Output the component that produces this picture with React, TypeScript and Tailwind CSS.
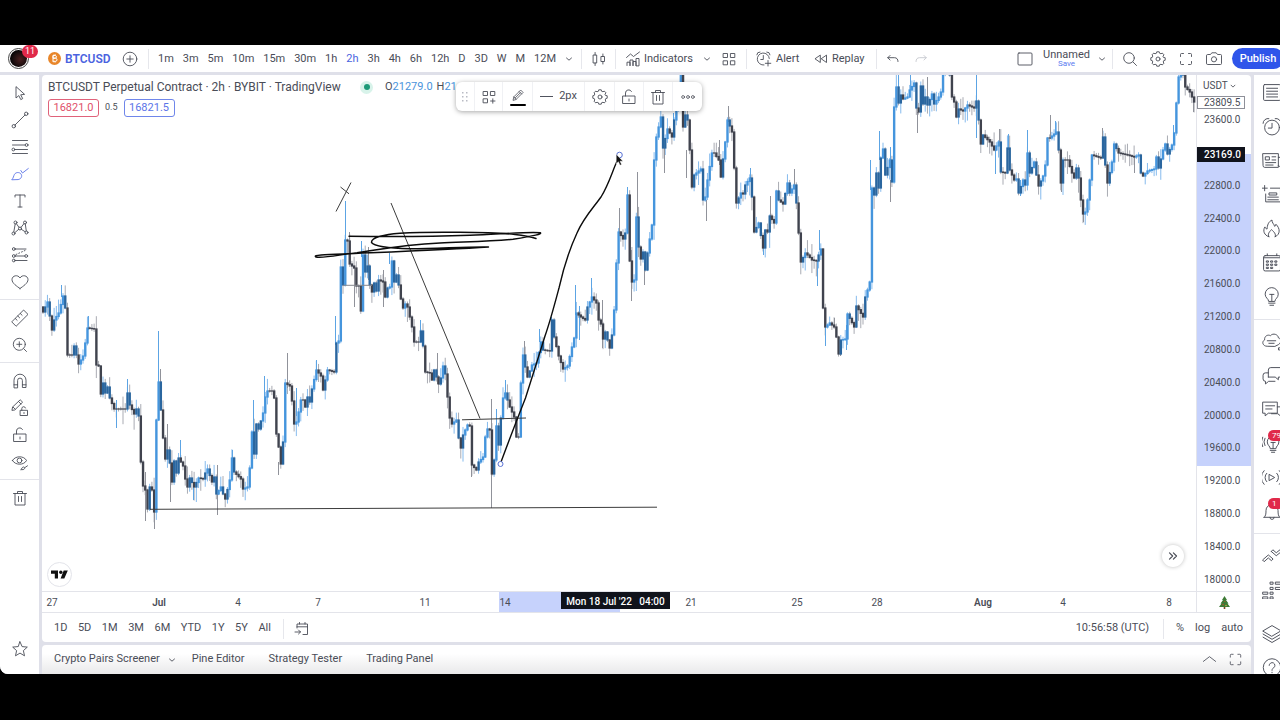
import type { ReactNode } from 'react';

/* ---------- icons ---------- */

type IconProps = { children: ReactNode; className?: string; size?: number };

function Icon({ children, className = '', size = 18 }: IconProps) {
  return (
    <svg
      width={size}
      height={size}
      viewBox="0 0 18 18"
      fill="none"
      stroke="currentColor"
      strokeWidth="0.9"
      strokeLinecap="round"
      strokeLinejoin="round"
      aria-hidden="true"
      className={`shrink-0 ${className}`}
    >
      {children}
    </svg>
  );
}

function gearPath(): string {
  const pts: string[] = [];
  for (let i = 0; i < 8; i++) {
    const base = (i * Math.PI) / 4;
    const spots: [number, number][] = [
      [-0.26, 6],
      [-0.17, 7.3],
      [0.17, 7.3],
      [0.26, 6],
    ];
    for (const [da, r] of spots) {
      pts.push(`${(9 + r * Math.cos(base + da)).toFixed(2)} ${(9 + r * Math.sin(base + da)).toFixed(2)}`);
    }
  }
  return `M${pts.join('L')}Z`;
}
const GEAR = gearPath();

const icons = {
  cursor: <path d="M5 3v11l2.800-2.400 2 4 1.900-1-2-3.800 3.500-.4z" />,
  trend: (
    <>
      <circle cx="2.800" cy="15.200" r="1.700" />
      <circle cx="15.200" cy="2.800" r="1.700" />
      <path d="M4 14 14 4" />
    </>
  ),
  fib: (
    <>
      <path d="M1.500 2.500h15M1.500 7h12.500M4 11.500H16.500M1.500 15.500h15" />
      <circle cx="15.600" cy="7" r="1.400" />
      <circle cx="2.400" cy="11.500" r="1.400" />
    </>
  ),
  brush: (
    <path d="M1 14.500c1.500-1.500 1.500-3.500 2.500-5.200C5 7 8.500 7 10 9s.4 5-2.500 5.500zM9.800 5.500 11.500 8 17.300 3.500" />
  ),
  text: <path d="M4 5V3h10v2M9 3v12M7 15h4" />,
  pattern: (
    <>
      <circle cx="4.500" cy="3.500" r="1.500" />
      <circle cx="14" cy="3.500" r="1.500" />
      <circle cx="2.500" cy="14.500" r="1.500" />
      <circle cx="9" cy="9.500" r="1.500" />
      <circle cx="15.500" cy="13.500" r="1.500" />
      <path d="M4.200 5 2.800 13M5.400 4.700 8 8.400M13 4.600 10 8.400M14.300 5l1 7M3.800 13.700 7.700 10.300M10.300 10.300l3.900 2.500" />
    </>
  ),
  forecast: (
    <>
      <circle cx="2.800" cy="3" r="1.400" />
      <path d="M4.200 3H15" />
      <circle cx="2.800" cy="10" r="1.400" />
      <circle cx="15.200" cy="10" r="1.400" />
      <path d="M4.200 10h9.600" />
      <circle cx="2.800" cy="14.500" r="1.400" />
      <path d="M4.200 14.500H16" />
      <path d="M5 8.500 14 4.500" strokeDasharray="1 2" />
    </>
  ),
  heart: <path d="M9 15.500C6 13.300 1 10.300 1 6.600 1 2.500 6.800 1.200 9 5c2.200-3.800 8-2.500 8 1.600 0 3.700-5 6.700-8 8.900z" />,
  ruler: <path d="m1 12.600 11.600-11.600 4.400 4.400L5.400 17zM4.300 9.500l1.800 1.800M6.800 7l1.800 1.800M9.300 4.500l1.800 1.800" />,
  zoomIn: (
    <>
      <circle cx="8.300" cy="8.300" r="6" />
      <path d="M12.800 12.800 15.500 15.500M5.800 8.300h5M8.300 5.800v5" />
    </>
  ),
  magnet: <path d="M3 15.500V8.200a6 6 0 0 1 12 0v7.300h-3.600V8.500a2.400 2.400 0 0 0-4.800 0v7zM3 12.800h3.600M11.400 12.800H15" />,
  pencilLock: (
    <path d="m1 11 .6-3L9.200.8l2.400 2.400L4 10.700zM7.500 2.500 10 5M2 8l2.200 2.200M9.500 16.500h7v-5.200h-7zM10.800 11.300V9.500a1.900 1.900 0 0 1 3.700-.5M13 13.500v1" />
  ),
  lockOpen: <path d="M3 8h12v7.500H3zM5.500 8V5a3.200 3.200 0 0 1 6-1.500M9 11v2" />,
  eye: (
    <>
      <path d="M1.500 7.500C4 2.500 13 2.500 15.500 7.500 13 12.500 4 12.500 1.500 7.500z" />
      <circle cx="8.500" cy="7.500" r="2.400" />
      <path d="M10 16.500c1-.6.8-2.300 2.500-2.500 1.600.1 1.800 2 0 2.500zM14 14.500l2.500-1.700" />
    </>
  ),
  trash: <path d="M2.500 4.500h13M6.500 4.500v-2h5v2M4 4.500V16h10V4.500M7.500 7.500v5M10.500 7.500v5" />,
  star: <path d="m9 1.800 2.100 4.800 5.200.5-3.900 3.500 1.100 5.200L9 13.100l-4.500 2.700 1.100-5.200-3.900-3.500 5.200-.5z" />,
  plusCircle: (
    <>
      <circle cx="9" cy="9" r="6.800" />
      <path d="M5.800 9h6.400M9 5.800v6.400" />
    </>
  ),
  candles: <path d="M3.500 5h3.200v8H3.500zM5.100 2.500V5M5.100 13v2.500M11.300 6.500h3.200v5h-3.200zM12.900 4v2.500M12.900 11.500V14" />,
  indicators: <path d="M3 15.500v-3.300h3v3.300M6 15.500V10h3v5.500M9 15.500v-4h3v4M12 15.500V8.500h3v7zM2.500 7.500 6.500 4l3 2.500L15.500 2" />,
  grid: <path d="M3.500 3.500h4v4h-4zM10.800 3.500h4v4h-4zM3.500 10.800h4v4h-4zM10.800 10.800h4v4h-4z" />,
  gridPlus: <path d="M3.500 3.500h4v4h-4zM10.800 3.500h4v4h-4zM3.500 10.800h4v4h-4zM12.800 10.800v4.400M10.600 13H15" />,
  alertPlus: <path d="M14.300 8.500A6 6 0 1 0 9 15M8.300 5.500v4H5.800M1.800 4.800A3 3 0 0 1 5 2M11.800 2A3 3 0 0 1 15 4.800M13 10.500v5.500M10.300 13.300h5.500" />,
  replay: <path d="M8.300 5.500v7L3.300 9zM14.500 5.500v7L9.500 9z" />,
  undo: <path d="M6 5.500 3.800 7.700 6 10M3.800 7.700h6.700c2.300 0 3.500 1.500 3.500 3.800" />,
  redo: <path d="M12 5.500 14.200 7.700 12 10M14.200 7.700H7.500C5.200 7.700 4 9.200 4 11.500" />,
  square: <rect x="2" y="3" width="14" height="12" rx="1" />,
  search: (
    <>
      <circle cx="8" cy="8" r="5.300" />
      <path d="m12 12 3.500 3.500" />
    </>
  ),
  gear: (
    <>
      <path d={GEAR} />
      <circle cx="9" cy="9" r="2" />
    </>
  ),
  full: <path d="M3.500 6.500V4.500A1 1 0 0 1 4.500 3.500h2M11.500 3.500h2A1 1 0 0 1 14.500 4.500v2M14.500 11.500v2a1 1 0 0 1-1 1h-2M6.500 14.500h-2A1 1 0 0 1 3.500 13.500v-2" />,
  camera: (
    <>
      <path d="M1.500 5.500A1 1 0 0 1 2.500 4.500h3L6.800 2.800h4.400l1.300 1.700h3a1 1 0 0 1 1 1v8a1 1 0 0 1-1 1h-13a1 1 0 0 1-1-1z" />
      <circle cx="9" cy="9.300" r="2.600" />
    </>
  ),
  chevron: <path d="m6.500 8 2.500 2.200L11.500 8" />,
  chevronUp: <path d="m2.500 11 6.500-5 6.500 5" />,
  goto: <path d="M4 8V4h10.500v10.500H10M4 6.800h10.500M6.500 4V2.500M12 4V2.500M2 12h5.500M5.500 10l2 2-2 2" />,
  pencil: <path d="m3.500 13.500.8-3.500 7.700-7.700 2.700 2.700L7 12.700zM10.300 4l2.700 2.700M4.300 10l2.700 2.700M5.700 11.300l6-6" />,
  dots: (
    <>
      <circle cx="3.500" cy="9" r="1.600" />
      <circle cx="9" cy="9" r="1.600" />
      <circle cx="14.500" cy="9" r="1.600" />
    </>
  ),
  watchlist: <path d="M2.500 1.500h14a1 1 0 0 1 1 1v13a1 1 0 0 1-1 1h-14a1 1 0 0 1-1-1v-13a1 1 0 0 1 1-1zM4.300 5h10.500M4.300 7.800h10.500M4.300 10.500h10.500M4.300 13.200h10.500" />,
  alarm: (
    <>
      <circle cx="9.500" cy="10" r="7" />
      <path d="M9.500 6v4.500H6M1 6A4.500 4.500 0 0 1 6.500 1.500M12.500 1.500A4.500 4.500 0 0 1 18 6" />
    </>
  ),
  news: <path d="M1 2.500h14.500V15.500H2.500A1.500 1.500 0 0 1 1 14zM15.500 6H18v8a1.500 1.500 0 0 1-2.500 0M3.500 5.500h3.500v3H3.500zM9.500 5.500H13M9.500 8.500H13M3.500 11h9.500M3.500 13.300h7" />,
  dataWindow: <path d="M2.500.5v5M0 3h5M8 3h9.500v13h-14V8.500M7 7.500h7v2H7zM5.500 11.500h10M5.500 14h10" />,
  fire: <path d="M6.500 16.800C2 15.500.5 11 2.800 7.500c.5 1.300 1 1.800 2 2C5 6 6 2.500 9.500 1c-.3 2.500 1.800 3.500 2.500 6 .8-.4 1-1 1.200-2 4 3.800 4.500 9.500-.7 11.800M6.500 16.800C5 14 7 12.300 9 10c2.300 2.300 4.500 4 3.500 6.800" />,
  calendar: (
    <>
      <rect x="1.500" y="2.500" width="16" height="14.500" rx="1.500" />
      <path d="M5 .8v1.700M14 .8v1.700M1.500 4.500h16" />
      <path d="M4.500 7.500h1.600v1.200H4.500zM8.500 7.500h1.600v1.200H8.500zM12.500 7.500h1.600v1.200h-1.600zM4.500 10.500h1.600v1.200H4.500zM8.500 10.500h1.600v1.200H8.500zM12.500 10.500h1.600v1.200h-1.600zM4.500 13.500h1.600v1.200H4.500zM8.500 13.500h1.600v1.200H8.500z" />
    </>
  ),
  bulb: <path d="M6.300 13.300C6.300 11 3 10.500 3 6.800a6.200 6.200 0 0 1 12.400 0c0 3.700-3.200 4.200-3.200 6.500zM6.300 15.300h6M7.500 17.300h3.500M7.300 7h4M9.300 7v6" />,
  cloud: <path d="M4.500 13.500C.5 13.500-.5 9 2.500 7.500 2 4 5.500 2 8 3.500c2.500-3 7.500-1 7.500 2 3 .8 3 5 0 6.500l-3 1.500zM5 8.300h8M6.500 10.700h5M16 15h2.500v2H16z" />,
  chats: <path d="M6 10.500V3.800A2.300 2.300 0 0 1 8.300 1.500h9M6 6.500H3.300A2.300 2.300 0 0 0 1 8.800v3.400a2.300 2.300 0 0 0 2.300 2.300v2.500l3-2.500h6M6 10.500h6.500l3 2.500v-2.500h2.500" />,
  messages: <path d="M1 2h13.500v10.500H6L3 15v-2.500H1zM3.500 5.500h8.500M3.500 8.500h6M14.500 6.500H18v9l-3-2.500H9" />,
  bulbLive: <path d="M7.800 13.500C7.800 11.500 5 10.800 5 7.500a5.500 5.500 0 0 1 11 0c0 3.300-2.800 4-2.800 6zM7.800 15.500h5.400M9 17.300h3M8.500 8h4M10.500 8v5.500M2.800 4a7 7 0 0 0 0 7M.6 3a9.500 9.500 0 0 0 0 9" />,
  stream: <path d="M7 6.200 12 9l-5 2.800zM4.500 5a5.500 5.500 0 0 0 0 8M2 2.500a9 9 0 0 0 0 13M14 5a5.500 5.500 0 0 1 0 8M16.500 2.500a9 9 0 0 1 0 13" />,
  bell: <path d="M2 14.500h15c-1.500-1.300-1.800-2.800-1.800-6.500a5.700 5.700 0 0 0-11.400 0c0 3.700-.3 5.200-1.800 6.500zM7.500 14.500a2 2 0 0 0 4 0" />,
  waves: <path d="M.8 13 6 8.500l4.500 3.800-1.600 1.600L6 11.300 2.300 14.600zM8.800 5.200l1.500-1.600 3.200 2.800L18 2.800M8.800 5.200l4.700 4L18 5.600" />,
  dom: <path d="M8 2h2.500v2H8zM13 2h5v2h-5zM8 7h2.500v2H8zM13 7h5v2h-5zM1 11.500h4.500v2H1zM8 11.500h2.500v2H8zM1 16h4.500v2H1zM8 16h2.500v2H8z" />,
  layers: <path d="m1 6.500 8.500-5 8.500 5-8.500 5zM1 9.500l8.500 5 8.500-5M1 12.500l8.500 5 8.500-5" />,
  help: (
    <>
      <circle cx="9.500" cy="9" r="8.300" />
      <path d="M6.800 7a2.700 2.700 0 1 1 4.200 2.300c-1 .7-1.500 1-1.500 2.400M9.500 13.500v.5" />
    </>
  ),
};

/* ---------- price series ---------- */

const CLOSES: number[] = [
  43,312,48,302,51,330,54,320,58,313,62,296,64,308,66,355,71,355,73,346,77,355,79,364,83,356,86,343,88,328,94,329,95,365,98,366,99,394,102,383,105,393,107,387,110,398,113,409,125,409,127,393,130,405,133,414,136,409,
  138,416,139,462,141,486,144,490,145,509,148,487,152,490,155,512,157,420,159,382,162,438,164,459,166,450,169,463,171,482,173,461,175,473,177,458,183,466,185,479,187,487,190,478,193,487,198,478,202,479,205,473,208,469,
  211,482,215,477,217,494,220,487,222,494,226,499,229,480,232,458,235,472,240,479,242,489,247,487,249,468,251,432,253,454,257,424,259,429,262,413,264,397,266,391,271,391,273,398,275,434,277,447,279,464,283,442,285,383,
  289,386,291,401,293,424,295,422,297,412,299,400,301,400,303,407,306,397,308,402,312,389,316,370,320,376,323,390,327,370,333,372,335,343,337,341,339,267,343,285,345,240,348,241,350,264,353,268,355,286,357,286,359,311,
  361,255,363,272,366,266,369,285,372,292,374,283,376,291,379,280,382,282,384,297,386,288,388,287,390,261,392,282,394,275,397,285,399,299,401,308,403,304,408,307,412,327,414,342,418,342,421,331,423,346,425,372,429,373,
  432,380,434,370,438,384,441,378,443,366,445,374,447,397,449,418,452,424,457,420,459,438,461,448,463,435,467,425,470,426,472,465,476,470,479,462,483,457,485,437,488,429,490,430,492,474,494,460,496,426,498,445,501,418,
  503,398,506,393,510,407,513,417,515,437,518,437,520,383,523,355,526,367,528,377,532,365,537,363,541,342,543,350,549,351,552,320,554,337,558,356,563,369,568,366,572,347,574,338,576,313,580,317,585,320,587,307,592,297,
  597,303,599,320,601,324,603,339,605,332,609,348,611,335,613,310,615,263,618,232,622,239,625,233,627,195,629,261,632,282,634,280,636,217,638,247,641,259,643,252,645,270,648,253,651,225,653,160,655,137,660,117,664,148,
  668,129,672,137,675,120,677,110,679,97,681,70,683,127,685,115,687,120,689,150,692,187,695,175,700,169,702,200,706,197,708,180,711,153,715,153,718,160,721,177,723,159,726,142,728,120,732,132,735,168,737,203,740,193,
  743,194,746,185,749,178,752,197,754,232,758,223,762,248,764,230,767,232,769,216,773,223,775,191,779,200,784,204,787,183,790,193,793,185,795,203,797,233,800,262,805,253,808,255,812,260,817,261,820,249,822,308,824,327,
  830,323,835,327,837,337,839,354,841,340,845,339,848,314,853,327,857,306,862,317,864,297,867,290,869,282,871,188,873,195,875,173,877,188,880,158,883,149,885,175,889,160,891,182,893,107,895,87,897,103,899,95,902,99,
  907,97,910,90,913,83,915,108,917,112,920,86,922,104,924,97,928,105,931,94,934,104,938,97,941,92,943,73,947,50,949,75,951,97,953,102,955,117,958,109,963,111,968,105,975,108,977,101,979,120,981,144,984,135,990,142,
  995,150,999,142,1001,172,1005,173,1008,148,1010,170,1013,180,1017,179,1019,193,1022,180,1024,185,1027,153,1030,173,1033,162,1036,175,1038,186,1042,176,1044,165,1046,138,1050,138,1057,132,1059,150,1061,183,1063,160,
  1068,160,1071,173,1075,178,1077,168,1079,178,1081,200,1083,214,1086,212,1088,200,1090,180,1092,155,1100,158,1102,137,1104,165,1108,183,1112,162,1115,144,1118,153,1127,155,1135,157,1139,155,1141,173,1143,176,1147,171,
  1153,169,1157,157,1159,168,1162,150,1166,144,1168,154,1172,145,1175,133,1177,103,1179,77,1181,68,1183,75,1185,87,1190,92,1193,102,
];

/* x, top, bottom and direction of the long wicks */
const WICKS: [number, number, number, boolean][] = [
  [61, 285, 297, true], [88, 316, 330, true], [116, 400, 428, true], [127, 379, 394, true], [145, 472, 521, false], [154, 498, 529, false], [158, 331, 385, true],
  [160, 369, 384, false], [167, 424, 455, false], [170, 462, 502, false], [180, 440, 462, true], [193, 487, 500, true], [217, 465, 515, false],
  [232, 450, 460, true], [253, 400, 440, true], [264, 376, 397, true], [278, 462, 475, false], [287, 353, 388, false], [296, 388, 416, true],
  [316, 360, 372, true], [335, 316, 345, true], [345, 201, 242, true], [349, 232, 244, false], [354, 268, 307, false], [361, 241, 257, true],
  [368, 247, 280, false], [383, 270, 307, false], [389, 253, 264, true], [420, 320, 332, true], [437, 353, 384, false], [471, 460, 477, false],
  [491, 399, 430, false], [491, 474, 508, false], [496, 409, 430, true], [505, 380, 395, true], [524, 341, 356, false], [539, 329, 342, true],
  [551, 317, 325, true], [575, 285, 315, true], [579, 306, 340, true], [591, 278, 298, true], [602, 300, 348, false], [619, 208, 234, false],
  [627, 187, 197, true], [631, 250, 301, false], [637, 172, 218, false], [644, 262, 285, false], [664, 148, 173, false], [673, 113, 125, true],
  [686, 150, 178, false], [706, 200, 221, false], [719, 140, 165, false], [728, 106, 122, false], [750, 168, 178, true], [763, 245, 255, true],
  [770, 196, 218, false], [794, 169, 185, false], [819, 230, 250, true], [817, 261, 286, true], [825, 327, 346, true], [834, 318, 326, false],
  [840, 350, 356, false], [846, 325, 350, true], [870, 160, 190, true], [879, 131, 160, true], [890, 180, 202, false], [890, 147, 160, true],
  [898, 75, 90, true], [910, 75, 90, true], [917, 112, 133, false], [927, 77, 100, false], [976, 75, 138, true], [999, 129, 142, false],
  [995, 150, 174, true], [1008, 134, 150, true], [1020, 180, 196, true], [1027, 130, 155, true], [1050, 115, 139, false], [1055, 121, 135, true],
  [1061, 180, 192, false], [1083, 212, 222, false], [1102, 128, 139, false], [1134, 156, 173, false], [1173, 125, 142, true], [1193, 100, 112, false],
];

type Bar = { x: number; open: number; close: number; color: string; hi: number; lo: number; up: boolean };

function buildBars(): Bar[] {
  const step = 80 / 36;
  const slots: [number, number][] = [];
  let last = -1;
  for (let i = 0; i < CLOSES.length; i += 2) {
    last = Math.max(last + 1, Math.round((CLOSES[i] - 43) / step));
    slots.push([last, CLOSES[i + 1]]);
  }
  const closes: number[] = [];
  for (let k = 0; k < slots.length; k++) {
    const [i1, y1] = slots[k];
    if (k > 0) {
      const [i0, y0] = slots[k - 1];
      for (let i = i0 + 1; i < i1; i++) closes.push(y0 + ((y1 - y0) * (i - i0)) / (i1 - i0));
    }
    closes.push(y1);
  }
  let seed = 7;
  const rand = () => {
    seed = (seed * 16807) % 2147483647;
    return seed / 2147483647;
  };
  let prevUp = false;
  return closes.map((close, i) => {
    const open = i === 0 ? close - 5 : closes[i - 1];
    const up = close < open;
    const turned = up !== prevUp && Math.abs(close - open) > 4 && Math.abs(close - open) < 32;
    prevUp = up;
    const color = turned ? '#2a669f' : up ? '#4595dd' : '#40434e';
    return {
      x: 43 + i * step,
      open,
      close,
      color,
      up,
      hi: Math.min(open, close) - 1 - rand() * rand() * 15,
      lo: Math.max(open, close) + 1 + rand() * rand() * 15,
    };
  });
}
const BARS = buildBars();

function PriceChart() {
  return (
    <svg
      className="absolute inset-0 h-full w-full"
      viewBox="42 75 1154 516"
      preserveAspectRatio="xMaxYMin slice"
      role="img"
      aria-label="BTCUSDT 2 hour candles"
    >
      {BARS.map((b, i) => (
        <rect key={i} x={b.x - 0.5} y={b.hi} width="1" height={b.lo - b.hi} fill={b.up ? '#86bbee' : '#a9abb3'} />
      ))}
      {WICKS.map(([x, top, bottom, up], i) => (
        <rect key={i} x={x} y={top} width="1" height={bottom - top} fill={up ? '#5ca4e4' : '#90929a'} />
      ))}
      {BARS.map((b, i) => (
        <rect
          key={i}
          x={b.x - 1.15}
          y={Math.min(b.open, b.close) - 0.6}
          width="2.400"
          height={Math.abs(b.close - b.open) + 1.2}
          fill={b.color}
        />
      ))}
      <g fill="none" stroke="#3c3c3c" strokeWidth="1">
        <path d="M150 509.300 657 507.200M391 203l89 215.500M462 419.800l64-1.800M336 211.500l15-29M340.500 187l8.500 6.800" />
        <path d="M343 285.300h29" stroke="#85878f" />
      </g>
      <g fill="none" stroke="#0c0c0c" strokeWidth="1.400" strokeLinecap="round" strokeLinejoin="round">
        <path d="M349 236.200C390 236.800 440 236.300 470 235.200S530 231.500 540.500 232.800C542 234 535 235.800 513 239.300C490 241.500 465 241.800 440 243C400 245 380 249.500 357 252.700C340 254.500 324 258.500 316 257C312 255 325 254.500 343 254C400 251.500 450 249.500 488.500 247C470 246.500 440 248.500 410 248.800C385 248 374 246 371.500 242.500C371 237 385 234.500 400 233.200C430 231.500 490 232 515 234.500Q528 236 536 238.500" />
        <path d="M501 462C508 443 518 417 525.500 398C531 381 540 352 545 336C550 322 555 303 559 288C563 270 571 246 577 233C584 217 594 207 601 197C609 184 612 172 617.500 160" />
      </g>
      <g fill="#fff" stroke="#5b74d6" strokeWidth="1">
        <circle cx="500.500" cy="464" r="2.500" />
        <circle cx="619.500" cy="155" r="2.800" />
      </g>
      <path d="M616.200 154.300v9.500l2.200-2 1.600 3.500 1.600-.8-1.500-3.300h2.900z" fill="#111" stroke="#fff" strokeWidth=".5" />
    </svg>
  );
}

/* ---------- page ---------- */

const INTERVALS = ['1m', '3m', '5m', '10m', '15m', '30m', '1h', '2h', '3h', '4h', '6h', '12h', 'D', '3D', 'W', 'M', '12M'];
const RANGES = ['1D', '5D', '1M', '3M', '6M', 'YTD', '1Y', '5Y', 'All'];
const PRICES = [23600, 23200, 22800, 22400, 22000, 21600, 21200, 20800, 20400, 20000, 19600, 19200, 18800, 18400, 18000];
const DATES: [string, number][] = [
  ['27', 10], ['Jul', 117], ['4', 196], ['7', 276], ['11', 383], ['14', 463],
  ['21', 649], ['25', 755], ['28', 835], ['Aug', 941], ['4', 1021], ['8', 1127],
];

type Tool = { label: string; icon: ReactNode; badge?: string; active?: boolean };

const LEFT_TOOLS: Tool[][] = [
  [
    { label: 'Cursor', icon: icons.cursor },
    { label: 'Trend line', icon: icons.trend },
    { label: 'Fib retracement', icon: icons.fib },
    { label: 'Brush', icon: icons.brush, active: true },
    { label: 'Text', icon: icons.text },
    { label: 'Patterns', icon: icons.pattern },
    { label: 'Prediction', icon: icons.forecast },
    { label: 'Icons', icon: icons.heart },
  ],
  [
    { label: 'Measure', icon: icons.ruler },
    { label: 'Zoom in', icon: icons.zoomIn },
  ],
  [
    { label: 'Magnet mode', icon: icons.magnet },
    { label: 'Stay in drawing mode', icon: icons.pencilLock },
    { label: 'Lock drawings', icon: icons.lockOpen },
    { label: 'Hide drawings', icon: icons.eye },
  ],
];

const RIGHT_TOOLS: Tool[][] = [
  [
    { label: 'Watchlist', icon: icons.watchlist },
    { label: 'Alerts', icon: icons.alarm },
    { label: 'News', icon: icons.news },
    { label: 'Data window', icon: icons.dataWindow },
    { label: 'Hotlists', icon: icons.fire },
    { label: 'Calendar', icon: icons.calendar },
    { label: 'My ideas', icon: icons.bulb },
  ],
  [
    { label: 'Public chats', icon: icons.cloud },
    { label: 'Private chats', icon: icons.chats },
    { label: 'Messages', icon: icons.messages },
    { label: 'Ideas stream', icon: icons.bulbLive, badge: '79' },
    { label: 'Streams', icon: icons.stream },
    { label: 'Notifications', icon: icons.bell, badge: '1' },
  ],
  [
    { label: 'Order panel', icon: icons.waves },
    { label: 'Depth of market', icon: icons.dom },
  ],
];

function Divider() {
  return <span className="h-5 w-px shrink-0 bg-[#e6e7ec]" />;
}

function IconButton({ label, children, className = '' }: { label: string; children: ReactNode; className?: string }) {
  return (
    <button type="button" aria-label={label} className={`flex shrink-0 items-center justify-center ${className}`}>
      {children}
    </button>
  );
}

function Header() {
  return (
    <header className="flex h-[27px] shrink-0 items-center overflow-hidden bg-white text-[11px]">
      <div className="flex w-[148px] shrink-0 items-center">
        <button type="button" aria-label="Account" className="relative ml-2 size-[21px] rounded-full border border-[#444] p-px">
          <span className="block size-full rounded-full bg-[radial-gradient(circle_at_60%_55%,#4a2020,#0b0708_65%)]" />
          <span className="absolute -top-1 left-[13px] flex h-[13px] w-4 items-center justify-center rounded-full bg-[#e0294a] text-[9px] text-white">
            11
          </span>
        </button>
        <svg width="13" height="13" viewBox="0 0 13 13" className="ml-[19px] shrink-0" aria-hidden="true">
          <circle cx="6.500" cy="6.500" r="6.500" fill="#e8862a" />
          <path
            d="M5 3.500h2.200c1.700 0 1.700 2.700 0 2.700H5zM5 6.200h2.600c1.900 0 1.900 3.100 0 3.100H4.600M5 3.500v5.800M6 2.400v1M7.300 2.400v1M6 9.400v1M7.300 9.400v1"
            fill="none"
            stroke="#fff"
            strokeWidth="1"
          />
        </svg>
        <button type="button" className="ml-1 text-[12px] font-semibold text-[#4a63e0]">BTCUSD</button>
        <IconButton label="Compare" className="ml-auto mr-[9px]">
          <Icon>{icons.plusCircle}</Icon>
        </IconButton>
      </div>
      <Divider />
      <nav aria-label="Interval" className="ml-[9px] flex w-[398px] shrink-0 items-center justify-between pt-px">
        {INTERVALS.map((t) => (
          <button key={t} type="button" className={t === '2h' ? 'text-[#4a63e0]' : ''}>
            {t}
          </button>
        ))}
      </nav>
      <IconButton label="More intervals" className="ml-1 mr-[3px]">
        <Icon>{icons.chevron}</Icon>
      </IconButton>
      <Divider />
      <IconButton label="Chart type" className="w-[33px]"><Icon>{icons.candles}</Icon></IconButton>
      <Divider />
      <button type="button" className="ml-2 flex w-[68px] shrink-0 items-center gap-[2px]">
        <Icon>{icons.indicators}</Icon>
        <span className="pt-px">Indicators</span>
      </button>
      <IconButton label="Favourite indicators" className="ml-[6px]"><Icon>{icons.chevron}</Icon></IconButton>
      <IconButton label="Templates" className="ml-1 mr-2"><Icon>{icons.grid}</Icon></IconButton>
      <Divider />
      <button type="button" className="ml-2 flex w-[45px] shrink-0 items-center gap-[3px]">
        <Icon>{icons.alertPlus}</Icon>
        <span className="pt-px">Alert</span>
      </button>
      <button type="button" className="ml-3 flex w-[54px] shrink-0 items-center gap-[2px]">
        <Icon>{icons.replay}</Icon>
        <span className="pt-px">Replay</span>
      </button>
      <span className="ml-[10px] flex"><Divider /></span>
      <IconButton label="Undo" className="ml-[7px]"><Icon>{icons.undo}</Icon></IconButton>
      <IconButton label="Redo" className="ml-[10px] text-[#c5c7ce]"><Icon>{icons.redo}</Icon></IconButton>

      <div className="ml-auto flex shrink-0 items-center">
        <IconButton label="Layout" className="mr-[9px]"><Icon>{icons.square}</Icon></IconButton>
        <div className="flex flex-col items-center leading-none">
          <span className="leading-[11px]">Unnamed</span>
          <button type="button" className="text-[8px] leading-2 text-[#5b7bf0]">Save</button>
        </div>
        <IconButton label="Manage layouts" className="ml-[3px] mr-[1px]"><Icon>{icons.chevron}</Icon></IconButton>
        <Divider />
        <div className="ml-2 flex items-center gap-[10px]">
          <IconButton label="Search"><Icon>{icons.search}</Icon></IconButton>
          <IconButton label="Settings"><Icon>{icons.gear}</Icon></IconButton>
          <IconButton label="Fullscreen"><Icon>{icons.full}</Icon></IconButton>
          <IconButton label="Snapshot"><Icon>{icons.camera}</Icon></IconButton>
        </div>
        <button type="button" className="-mr-1 ml-[9px] flex h-[21px] w-[52px] items-center justify-center rounded-full bg-[#2f55ea] pt-px font-medium text-white">
          Publish
        </button>
      </div>
    </header>
  );
}

function LeftToolbar() {
  return (
    <aside aria-label="Drawing tools" className="flex w-[39px] shrink-0 flex-col bg-white">
      {LEFT_TOOLS.map((group, g) => (
        <div key={g} className="flex flex-col border-b border-[#e3e4ea] py-1">
          {group.map((t) => (
            <IconButton key={t.label} label={t.label} className={`h-[27px] w-full ${t.active ? 'text-[#5b74e8]' : ''}`}>
              <Icon>{t.icon}</Icon>
            </IconButton>
          ))}
        </div>
      ))}
      <IconButton label="Remove drawings" className="mt-1 h-[27px] w-full"><Icon>{icons.trash}</Icon></IconButton>
      <IconButton label="Favourites" className="mt-auto mb-3 h-[27px] w-full"><Icon>{icons.star}</Icon></IconButton>
    </aside>
  );
}

function RightToolbar() {
  return (
    <aside aria-label="Widgets" className="flex w-[26px] shrink-0 flex-col overflow-hidden bg-white">
      {RIGHT_TOOLS.map((group, g) => (
        <div key={g} className={g === 0 ? 'border-b border-[#e3e4ea] pb-[6px]' : g === 1 ? 'border-b border-[#e3e4ea] pt-1 pb-[5px]' : 'pt-1'}>
          {group.map((t) => (
            <button key={t.label} type="button" aria-label={t.label} className="relative flex h-[34px] w-full items-center pl-2">
              <Icon size={19}>{t.icon}</Icon>
              {t.badge && (
                <span className="absolute top-1 left-[14px] flex h-[11px] min-w-4 items-center rounded-full bg-[#e0294a] px-1 text-[8px] text-white">
                  {t.badge}
                </span>
              )}
            </button>
          ))}
        </div>
      ))}
      <IconButton label="Object tree" className="mt-[10px] h-[34px] w-full justify-start! pl-2"><Icon size={19}>{icons.layers}</Icon></IconButton>
      <IconButton label="Help" className="h-[34px] w-full justify-start! pl-2"><Icon size={19}>{icons.help}</Icon></IconButton>
    </aside>
  );
}

function DrawingToolbar() {
  return (
    <div
      role="toolbar"
      aria-label="Brush"
      className="absolute top-[7px] left-[414px] flex h-[29px] items-center divide-x divide-[#f0f1f4] rounded-md bg-white text-[11px] shadow-[0_1px_5px_rgba(0,0,0,0.35)]"
    >
      <span className="flex h-full w-[19px] items-center justify-center">
        <svg width="6" height="10" viewBox="0 0 6 10" fill="#b9bbc4" aria-hidden="true">
          <path d="M0 0h1.500v1.500H0zM4 0h1.500v1.500H4zM0 4h1.500v1.500H0zM4 4h1.500v1.500H4zM0 8h1.500v1.500H0zM4 8h1.500v1.500H4z" />
        </svg>
      </span>
      <IconButton label="Templates" className="h-full w-[28px]"><Icon>{icons.gridPlus}</Icon></IconButton>
      <button type="button" aria-label="Line colour" className="flex h-full w-[30px] flex-col items-center justify-center">
        <Icon size={16}>{icons.pencil}</Icon>
        <span className="h-[2px] w-4 rounded-full bg-black" />
      </button>
      <button type="button" className="flex h-full w-[52px] items-center justify-center gap-[6px]">
        <span className="h-px w-[13px] bg-[#50535e]" />
        2px
      </button>
      <IconButton label="Settings" className="h-full w-[30px]"><Icon>{icons.gear}</Icon></IconButton>
      <IconButton label="Lock" className="h-full w-[29px]"><Icon>{icons.lockOpen}</Icon></IconButton>
      <IconButton label="Remove" className="h-full w-[29px]"><Icon>{icons.trash}</Icon></IconButton>
      <IconButton label="More" className="h-full w-[29px]"><Icon size={16}>{icons.dots}</Icon></IconButton>
    </div>
  );
}

function ChartPane() {
  return (
    <div className="relative min-w-0 flex-1 overflow-hidden">
      <PriceChart />
      <div className="relative flex items-center px-[6px] pt-1 leading-4">
        <h1 className="min-w-[300px] text-[12px] whitespace-nowrap">BTCUSDT Perpetual Contract · 2h · BYBIT · TradingView</h1>
        <span className="ml-3 flex size-[13px] items-center justify-center rounded-full bg-[#d8f3ea]">
          <span className="size-[6px] rounded-full bg-[#1d9a78]" />
        </span>
        <p className="ml-3 flex gap-1 text-[11px]">
          <span>O<span className="text-[#4a94dc]">21279.0</span></span>
          <span>H<span className="text-[#4a94dc]">21</span></span>
        </p>
      </div>
      <div className="relative mt-1 flex items-center gap-[6px] px-[6px] text-[11px]">
        <button type="button" className="h-[18px] w-[51px] rounded-[3px] border border-[#e0627a] text-[#e0506a]">16821.0</button>
        <span className="text-[9px]">0.5</span>
        <button type="button" className="h-[18px] w-[51px] rounded-[3px] border border-[#6f86ea] text-[#5b74e8]">16821.5</button>
      </div>
      <DrawingToolbar />
      <a
        href="#tradingview"
        aria-label="TradingView"
        className="absolute bottom-1 left-[5px] flex size-[25px] items-center justify-center rounded-full border border-[#e3e4ea] bg-white"
      >
        <svg width="17" height="9" viewBox="0 0 17 9" fill="#111" aria-hidden="true">
          <path d="M0 .5h7V8.500H3.800V3.800H0zM12.700.5H16.800L13.300 8.500H9.600z" />
          <circle cx="9.800" cy="2.200" r="1.700" />
        </svg>
      </a>
      <IconButton
        label="Scroll to the most recent bar"
        className="absolute right-3 bottom-6 size-[22px] rounded-full bg-white shadow-[0_0_4px_rgba(0,0,0,0.25)]"
      >
        <Icon size={14}><path d="m4.500 5 4 4-4 4M9.500 5l4 4-4 4" strokeWidth="1.500" /></Icon>
      </IconButton>
    </div>
  );
}

function PriceScale() {
  return (
    <div className="relative flex w-[55px] shrink-0 flex-col border-l border-[#e3e4ea] text-[10px] leading-[13px]">
      <div className="absolute inset-x-0 top-[79px] h-[312px] bg-[#c6d2fc]" />
      <button type="button" className="relative mt-1 ml-[6px] flex items-center">
        USDT
        <Icon size={10}><path d="m5.500 7.500 3.500 3.500 3.500-3.500" strokeWidth="1.500" /></Icon>
      </button>
      <div className="mt-1 mr-[6px] border border-[#8e9099] pl-[6px] leading-[11px]">23809.5</div>
      <ul className="relative mt-1 mb-[5px] flex flex-1 flex-col justify-between pl-[7px]">
        {PRICES.map((p) => (
          <li key={p} className={p === 23200 ? 'invisible' : ''}>{p.toFixed(1)}</li>
        ))}
      </ul>
      <div className="absolute top-[72px] left-0 w-12 bg-[#10131c] pl-[7px] leading-[15px] font-medium text-white">23169.0</div>
    </div>
  );
}

function TimeScale() {
  return (
    <div className="flex h-[22px] shrink-0 border-y border-[#e3e4ea] text-[10px]">
      <div className="relative min-w-0 flex-1">
        <div className="absolute inset-y-0 left-[457px] w-[121px] bg-[#c6d2fc]" />
        {DATES.map(([label, x]) => (
          <span
            key={`${label}-${x}`}
            style={{ left: x }}
            className={`absolute top-1 -translate-x-1/2 leading-[14px] ${label.length === 3 ? 'font-semibold' : ''}`}
          >
            {label}
          </span>
        ))}
        <span className="absolute top-0 left-[519px] flex h-[17px] w-[109px] items-end justify-center bg-[#10131c] leading-[14px] font-medium whitespace-pre text-white">
          Mon 18 Jul '22{'   '}04:00
        </span>
      </div>
      <div className="flex w-[55px] items-center justify-center border-l border-[#e3e4ea]">
        <svg width="11" height="13" viewBox="0 0 11 13" aria-hidden="true">
          <path d="M5.500 0 8 4H7l2.500 3.500h-1L11 11H0l2.500-3.500h-1L4 4H3z" fill="#3d7a35" />
          <path d="M4.700 11h1.600v2H4.700z" fill="#7a4a25" />
          <circle cx="4" cy="8.500" r=".7" fill="#d8452e" />
          <circle cx="7" cy="9.500" r=".7" fill="#e6b03a" />
          <circle cx="5.800" cy="5.500" r=".6" fill="#d8452e" />
        </svg>
      </div>
    </div>
  );
}

function RangeBar() {
  return (
    <div className="flex h-[29px] shrink-0 items-center px-3 pt-[2px] text-[11px]">
      <nav aria-label="Range" className="flex w-[217px] items-center justify-between">
        {RANGES.map((r) => (
          <button key={r} type="button">{r}</button>
        ))}
      </nav>
      <span className="ml-3 flex"><Divider /></span>
      <IconButton label="Go to date" className="ml-[9px]"><Icon>{icons.goto}</Icon></IconButton>
      <button type="button" className="ml-auto">10:56:58 (UTC)</button>
      <span className="mr-3 ml-[14px] flex"><Divider /></span>
      <div className="-mr-1 flex w-[67px] items-center justify-between">
        <button type="button">%</button>
        <button type="button">log</button>
        <button type="button">auto</button>
      </div>
    </div>
  );
}

function BottomPanel() {
  return (
    <footer className="mt-[3px] flex h-[29px] shrink-0 items-center rounded-t-sm bg-linear-to-b from-white from-30% to-[#e9e9ea] px-3 text-[11px]">
      <button type="button" className="flex items-center gap-[3px]">
        Crypto Pairs Screener
        <Icon>{icons.chevron}</Icon>
      </button>
      <div className="ml-[11px] flex gap-6">
        <button type="button">Pine Editor</button>
        <button type="button">Strategy Tester</button>
        <button type="button">Trading Panel</button>
      </div>
      <div className="-mr-[5px] ml-auto flex items-center gap-[9px]">
        <IconButton label="Open panel"><Icon size={17}>{icons.chevronUp}</Icon></IconButton>
        <IconButton label="Maximize panel"><Icon size={17}>{icons.full}</Icon></IconButton>
      </div>
    </footer>
  );
}

export default function App() {
  return (
    <div className="flex h-screen flex-col overflow-hidden bg-black pt-[45px] pb-[46px] font-['Roboto','Liberation_Sans',sans-serif] text-[#4a4d57]">
      <div className="flex min-h-0 flex-1 flex-col overflow-hidden rounded-bl-lg bg-[#dfe0e9]">
        <Header />
        <div className="mt-[3px] flex min-h-0 flex-1 gap-[3px]">
          <LeftToolbar />
          <main className="flex min-w-0 flex-1 flex-col">
            <div className="flex min-h-0 flex-1 flex-col rounded-sm bg-white">
              <div className="flex min-h-0 flex-1">
                <ChartPane />
                <PriceScale />
              </div>
              <TimeScale />
              <RangeBar />
            </div>
            <BottomPanel />
          </main>
          <RightToolbar />
        </div>
      </div>
    </div>
  );
}
